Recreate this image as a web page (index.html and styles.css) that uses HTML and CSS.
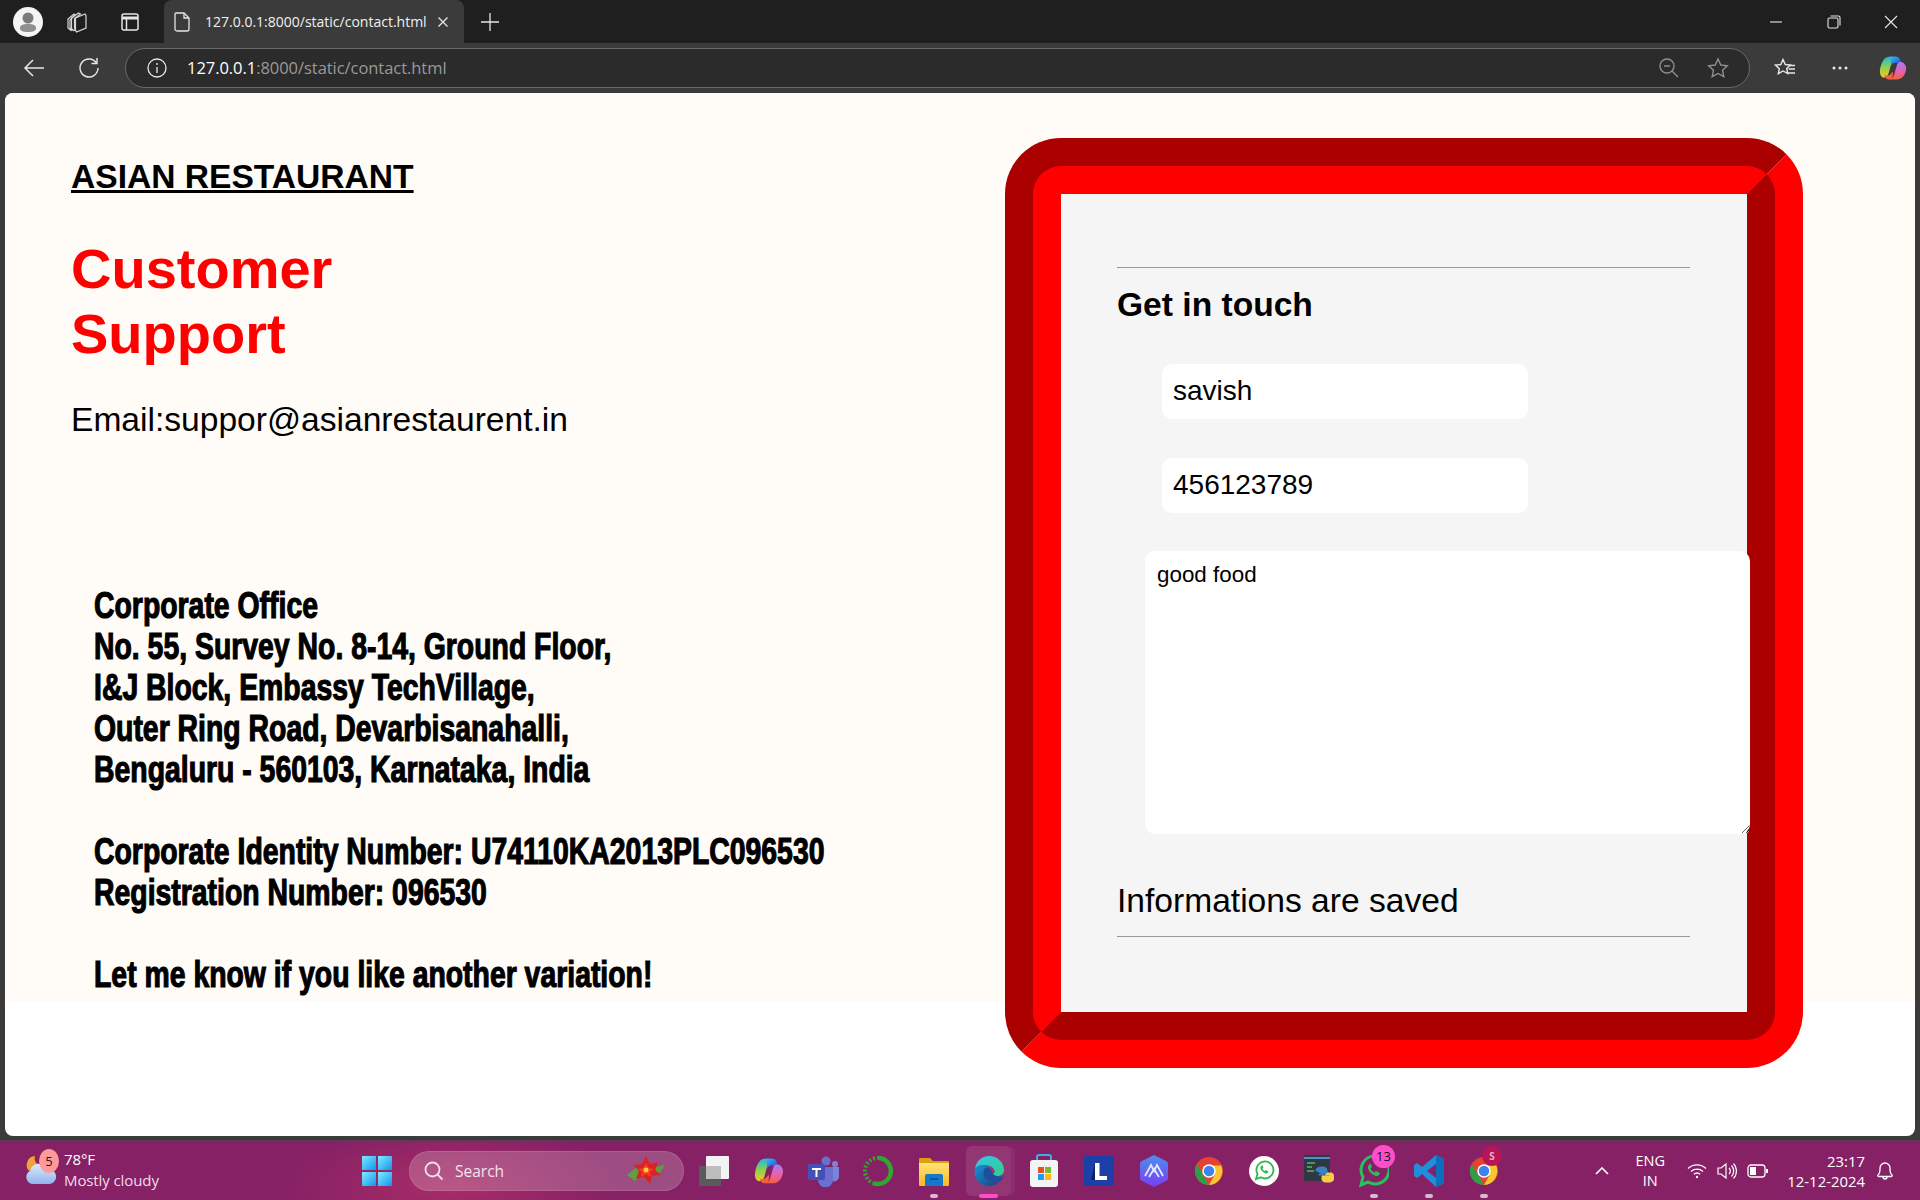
FILE: index.html
```html
<!DOCTYPE html>
<html lang="en">
<head>
<meta charset="utf-8">
<title>Contact</title>
<link rel="stylesheet" href="styles.css">
</head>
<body>
<svg class="defs" aria-hidden="true">
  <defs>
    <linearGradient id="cpA" x1="0" y1="0" x2="1" y2="1"><stop offset="0" stop-color="#2fc6f5"/><stop offset=".5" stop-color="#2a7be8"/><stop offset="1" stop-color="#1f4fc0"/></linearGradient>
    <linearGradient id="cpB" x1="0" y1="0" x2="0" y2="1"><stop offset="0" stop-color="#1fb7e8"/><stop offset=".5" stop-color="#8ed14c"/><stop offset="1" stop-color="#f5c62a"/></linearGradient>
    <linearGradient id="cpC" x1="0" y1="0" x2="0" y2="1"><stop offset="0" stop-color="#a67cf2"/><stop offset=".55" stop-color="#e85fb0"/><stop offset="1" stop-color="#f5603c"/></linearGradient>
    <linearGradient id="edgeA" x1="0" y1="0" x2="1" y2="1"><stop offset="0" stop-color="#35c6e8"/><stop offset="1" stop-color="#2fd08a"/></linearGradient>
    <linearGradient id="edgeB" x1="0" y1="0" x2="1" y2="1"><stop offset="0" stop-color="#1e8fd8"/><stop offset="1" stop-color="#12447f"/></linearGradient>
    <linearGradient id="folder" x1="0" y1="0" x2="0" y2="1"><stop offset="0" stop-color="#ffe27a"/><stop offset="1" stop-color="#fbb91c"/></linearGradient>
    <linearGradient id="win" x1="0" y1="0" x2="1" y2="1"><stop offset="0" stop-color="#7fecff"/><stop offset="1" stop-color="#0f94f0"/></linearGradient>
    <linearGradient id="hex" x1="0" y1="0" x2="0" y2="1"><stop offset="0" stop-color="#4d8ff0"/><stop offset="1" stop-color="#7a3df0"/></linearGradient>
    <linearGradient id="cloud" x1="0" y1="0" x2="0" y2="1"><stop offset="0" stop-color="#dfeafa"/><stop offset="1" stop-color="#8fb4ec"/></linearGradient>
    <symbol id="chrome" viewBox="0 0 32 32">
      <circle cx="16" cy="16" r="15" fill="#e3432f"/>
      <path d="M3 8.500 16 31a15 15 0 0 1-13-22.500z" fill="#2f9e4a"/>
      <path d="M16 10h13a15 15 0 0 1-13 21l6-11z" fill="#f8c62e"/>
      <circle cx="16" cy="16" r="7.200" fill="#fff"/>
      <circle cx="16" cy="16" r="5.600" fill="#3d82ee"/>
    </symbol>
    <symbol id="copilot" viewBox="0 0 32 32">
      <path d="M11 3h9c-4 1-5 4-6 8l-3 11c-1 3-3 5-6 5-3-1-4-4-4-7 0-6 4-17 10-17z" fill="url(#cpB)"/>
      <path d="M12 3h8c2 0 3 1 4 3l2 6c-2-2-4-2-7-2-3 0-4 1-5 4 0-4 0-9-2-11z" fill="url(#cpA)"/>
      <path d="M21 29h-9c4-1 5-4 6-8l3-10c1-2 3-2 5-2 3 1 5 4 5 7 0 6-4 13-10 13z" fill="url(#cpC)"/>
      <path d="M11 29c-2 0-3-1-4-3l-1-2c2 1 5 1 7-1l3-3c0 4 0 7-2 9z" fill="#f2603c"/>
    </symbol>
  </defs>
</svg>

<div class="browser">
  <header class="tabstrip">
    <svg class="avatar" width="30" height="30" viewBox="0 0 30 30"><circle cx="15" cy="15" r="15" fill="#f4f4f4"/><circle cx="15" cy="11" r="5.500" fill="#7b7b7b"/><path d="M7 21c0-3 3-4 8-4s8 1 8 4c0 3-3 4-8 4s-8-1-8-4z" fill="#8f8f8f"/></svg>
    <svg class="strip-icon ws" width="24" height="24" viewBox="0 0 24 24" fill="none" stroke="#d8d8d8" stroke-width="1.200"><path d="M3 9l6-5 1 1-5 5v8l2 2-1 .6L3 18z"/><path d="M6.500 8l7-5 2 1-6 4.500v9.500l1 2-2 .5-2-2z"/><path d="M10.500 8l9.500-4 1 1.500v12.500l-9.500 4-1-1.500z"/></svg>
    <svg class="strip-icon vt" width="20" height="20" viewBox="0 0 20 20" fill="none" stroke="#e6e6e6" stroke-width="1.500"><rect x="2" y="2" width="16" height="16" rx="2"/><path d="M2 6h16" stroke-width="3"/><path d="M6.500 6v12"/></svg>
    <div class="tab">
      <svg width="16" height="20" viewBox="0 0 16 20" fill="none" stroke="#e6e6e6" stroke-width="1.300"><path d="M2 1h8l5 5v11a2 2 0 0 1-2 2H3a2 2 0 0 1-2-2V2a1 1 0 0 1 1-1z"/><path d="M10 1v5h5"/></svg>
      <span class="tab-title">127.0.0.1:8000/static/contact.html</span>
      <svg class="tab-x" width="12" height="12" viewBox="0 0 12 12" stroke="#e6e6e6" stroke-width="1.300"><path d="M1.500 1.500l9 9M10.500 1.500l-9 9"/></svg>
    </div>
    <svg class="plus" width="18" height="18" viewBox="0 0 18 18" stroke="#e6e6e6" stroke-width="1.300"><path d="M9 0v18M0 9h18"/></svg>
    <div class="winctl">
      <svg width="14" height="14" viewBox="0 0 14 14" stroke="#e6e6e6" stroke-width="1.100"><path d="M1 7h12"/></svg>
      <svg width="14" height="14" viewBox="0 0 14 14" fill="none" stroke="#e6e6e6" stroke-width="1.100"><rect x="1" y="3" width="10" height="10" rx="1.500"/><path d="M3.500 1h8a1.500 1.500 0 0 1 1.500 1.500v8"/></svg>
      <svg width="14" height="14" viewBox="0 0 14 14" stroke="#e6e6e6" stroke-width="1.100"><path d="M1 1l12 12M13 1L1 13"/></svg>
    </div>
  </header>

  <nav class="toolbar">
    <svg class="tool-back" width="22" height="20" viewBox="0 0 22 20" fill="none" stroke="#e8e8e8" stroke-width="1.500"><path d="M21 10H2M10 2l-8 8 8 8"/></svg>
    <svg class="tool-reload" width="22" height="22" viewBox="0 0 22 22" fill="none" stroke="#e8e8e8" stroke-width="1.400"><path d="M18.500 6A9 9 0 1 0 20 11"/><path d="M19 1v5.500h-5.500"/></svg>
    <div class="addr">
      <svg width="20" height="20" viewBox="0 0 20 20" fill="none" stroke="#e8e8e8" stroke-width="1.300"><circle cx="10" cy="10" r="9"/><path d="M10 9v6M10 5v2"/></svg>
      <span class="url"><b>127.0.0.1</b>:8000/static/contact.html</span>
      <svg class="zoom-ic" width="20" height="20" viewBox="0 0 20 20" fill="none" stroke="#8f8f8f" stroke-width="1.400"><circle cx="8" cy="8" r="7"/><path d="M5 8h6M13 13l6 6"/></svg>
      <svg class="star-ic" width="22" height="22" viewBox="0 0 22 22" fill="none" stroke="#8f8f8f" stroke-width="1.400"><path d="M11 2l2.800 6 6.500.8-4.800 4.400 1.300 6.500L11 16.500l-5.800 3.200 1.300-6.500L1.700 8.800 8.200 8z"/></svg>
    </div>
    <svg class="fav-ic" width="22" height="20" viewBox="0 0 22 20" fill="none" stroke="#e8e8e8" stroke-width="1.400"><path d="M9 1.500l2.300 5 5 .6-3.600 3.400 1 5L9 13l-4.700 2.700 1-5L1.500 7.100l5.300-.6z"/><path d="M15 7.500h6M14.500 11h6.500M13 15h8"/></svg>
    <svg class="dots-ic" width="16" height="4" viewBox="0 0 16 4" fill="#e8e8e8"><circle cx="2" cy="2" r="1.500"/><circle cx="8" cy="2" r="1.500"/><circle cx="14" cy="2" r="1.500"/></svg>
    <svg class="copilot-ic" width="28" height="28"><use href="#copilot"/></svg>
  </nav>

  <div class="viewport">
    <main class="page">
      <section class="info">
        <h2 class="brand">ASIAN RESTAURANT</h2>
        <h1 class="support">Customer<br>Support</h1>
        <p class="email">Email:suppor@asianrestaurent.in</p>
        <p class="office">Corporate Office<br>No. 55, Survey No. 8-14, Ground Floor,<br>I&amp;J Block, Embassy TechVillage,<br>Outer Ring Road, Devarbisanahalli,<br>Bengaluru - 560103, Karnataka, India<br><br>Corporate Identity Number: U74110KA2013PLC096530<br>Registration Number: 096530<br><br>Let me know if you like another variation!</p>
      </section>
      <form class="card">
        <hr class="rule">
        <h3 class="touch">Get in touch</h3>
        <input class="field" type="text" value="savish">
        <input class="field" type="text" value="456123789">
        <textarea class="message">good food</textarea>
        <p class="saved">Informations are saved</p>
        <hr class="rule">
      </form>
    </main>
  </div>
</div>

<footer class="taskbar">
  <div class="weather">
    <svg class="weather-ic" width="34" height="34" viewBox="0 0 34 34"><path d="M12 2a9 9 0 0 0-6 15l9-6c-3-3-4-6-3-9z" fill="#f2a13a"/><path d="M9 30a7 7 0 0 1-2-13 9 9 0 0 1 17-2 7 7 0 0 1 3 15z" fill="url(#cloud)"/></svg>
    <span class="w-badge">5</span>
    <div class="w-text"><span class="w-temp">78°F</span><span>Mostly cloudy</span></div>
  </div>
  <svg class="start" width="30" height="30" viewBox="0 0 30 30"><g fill="url(#win)"><path d="M1 0h13v14H0V1a1 1 0 0 1 1-1z"/><path d="M16 0h13a1 1 0 0 1 1 1v13H16z"/><path d="M0 16h14v14H1a1 1 0 0 1-1-1z"/><path d="M16 16h14v13a1 1 0 0 1-1 1H16z"/></g></svg>
  <div class="search">
    <svg width="20" height="20" viewBox="0 0 20 20" fill="none" stroke="#f0dfe9" stroke-width="1.800"><circle cx="8.500" cy="8.500" r="7"/><path d="M13.500 13.500l5 5"/></svg>
    <span class="search-label">Search</span>
    <svg class="flower" width="42" height="32" viewBox="0 0 42 32"><path d="M2 20l10-8 6 8-8 6z" fill="#5f9e43"/><path d="M40 10l-10 2 2 10z" fill="#5f9e43"/><path d="M21 1l4 8 8-2-3 8 6 5-9 1-2 8-6-7-8 2 3-8-5-6 8-1z" fill="#dd2020"/><path d="M21 8l3 5 5 1-4 3 1 5-5-3-5 3 1-5-4-3 5-1z" fill="#f53a2a"/><circle cx="21" cy="15" r="2.500" fill="#f0d030"/></svg>
  </div>
  <div class="apps">
    <div class="slot"><svg width="30" height="30" viewBox="0 0 30 30"><rect x="0" y="10" width="22" height="20" rx="1" fill="#5a5a5a"/><rect x="7" y="0" width="23" height="23" rx="1" fill="#f3f3f3"/><rect x="7" y="10" width="15" height="13" fill="#bdbdbd"/></svg></div>
    <div class="slot"><svg width="30" height="34"><use href="#copilot"/></svg></div>
    <div class="slot"><svg width="32" height="32" viewBox="0 0 32 32"><circle cx="18" cy="6" r="4.500" fill="#6a6fd0"/><circle cx="27" cy="9" r="3" fill="#7b83d8"/><path d="M22 12h9v10a5 5 0 0 1-7 4z" fill="#7b83d8"/><path d="M10 12h15v13a7 7 0 0 1-15 0z" fill="#6a6fd0"/><rect x="0" y="9" width="17" height="16" rx="2" fill="#4450b8"/><path d="M4 13h9v2h-3.500v7h-2v-7H4z" fill="#fff"/></svg></div>
    <div class="slot"><svg width="32" height="32" viewBox="0 0 32 32" fill="none"><path d="M16 3a13 13 0 1 1-6 25" stroke="#2ea82e" stroke-width="4.500"/><path d="M16 3A13 13 0 0 0 10 28" stroke="#2ea82e" stroke-width="4" stroke-dasharray="2 2"/></svg></div>
    <div class="slot running"><svg width="30" height="30" viewBox="0 0 30 30"><path d="M0 3a1 1 0 0 1 1-1h10l3 3h15a1 1 0 0 1 1 1v4H0z" fill="#dfa010"/><path d="M0 7h30v22a1 1 0 0 1-1 1H1a1 1 0 0 1-1-1z" fill="url(#folder)"/><path d="M6 20a2 2 0 0 1 2-2h14a2 2 0 0 1 2 2v10H6z" fill="#1379c8"/><path d="M11 23h8" stroke="#0b4f8a" stroke-width="1.500"/></svg></div>
    <div class="slot active"><svg width="30" height="30" viewBox="0 0 30 30"><path d="M1 13C2 5 8 0 15 0c8 0 15 6 15 14 0 4-3 6-7 6-3 0-4-1-4-2 3-1 2-6-3-8C10 8 3 9 1 13z" fill="url(#edgeA)"/><path d="M1 13c-2 8 3 16 13 17 4 0 8-1 11-4-4 1-9 1-12-2-3-4-2-9 3-13C10 8 3 9 1 13z" fill="url(#edgeB)"/><path d="M13 11c-4 2-5 8-1 12 3 3 9 4 13 3 2-1 4-3 5-6-3 1-8 1-11-2-1-2-2-5-6-7z" fill="#1c4f9c"/></svg></div>
    <div class="slot"><svg width="30" height="34" viewBox="0 0 30 34"><path d="M8 8V3a2 2 0 0 1 2-2h10a2 2 0 0 1 2 2v5" fill="none" stroke="#2fb5e8" stroke-width="2"/><rect x="1" y="6" width="28" height="27" rx="3" fill="#f4f4f4"/><rect x="9" y="13" width="6" height="6" fill="#e8501f"/><rect x="16" y="13" width="6" height="6" fill="#7cb82f"/><rect x="9" y="20" width="6" height="6" fill="#19a0e8"/><rect x="16" y="20" width="6" height="6" fill="#fab81a"/></svg></div>
    <div class="slot"><svg width="30" height="30" viewBox="0 0 30 30"><rect width="30" height="30" fill="#1c3fa8"/><path d="M11 7h4.500v13H23v4H11z" fill="#fff"/><path d="M11 7v17H7z" fill="#0c2560"/></svg></div>
    <div class="slot"><svg width="28" height="32" viewBox="0 0 28 32"><path d="M14 0l12 6c2 1 2 2 2 4v12c0 2 0 3-2 4l-12 6-12-6c-2-1-2-2-2-4V10c0-2 0-3 2-4z" fill="url(#hex)"/><path d="M5 21l6-11 3 6 3-6 6 11M9 22l5-8 5 8" fill="none" stroke="#e0e8ff" stroke-width="1.800"/></svg></div>
    <div class="slot"><svg width="30" height="30"><use href="#chrome"/></svg></div>
    <div class="slot"><svg width="30" height="30" viewBox="0 0 30 30"><circle cx="15" cy="15" r="15" fill="#fff"/><path d="M7 23l1.500-5a8.500 8.500 0 1 1 3.200 3.300z" fill="none" stroke="#2fb84e" stroke-width="1.800"/><path d="M12 10c-1 1-1 3 1 5s4 3 5.500 2l1-1.500-2.500-1.500-1 1c-1 0-2.500-1.500-2.500-2.500l1-1-1.200-2.300z" fill="#2fb84e"/></svg></div>
    <div class="slot"><svg width="30" height="32" viewBox="0 0 30 32"><rect x="0" y="0" width="26" height="26" rx="1" fill="#2f3a40"/><path d="M0 3h26" stroke="#4b8fd0" stroke-width="2"/><path d="M3 8h8M3 12h5M3 16h7" stroke="#58b368" stroke-width="1.300"/><path d="M12 16c0-3 2-4 5-4h3c2 0 3 2 3 4v3h-8v1h5" fill="#3d7fc0" stroke="#3d7fc0" stroke-width="1"/><path d="M23 18h4c2 0 3 2 3 4 0 4-2 5-5 5h-3c-3 0-4-1-4-3v-3h8v-1h-5" fill="#f5cf45" stroke="#f5cf45" stroke-width="1"/></svg></div>
    <div class="slot running"><svg width="30" height="34" viewBox="0 0 30 34" fill="none"><path d="M2 31l2-8a14 14 0 1 1 5 5z" stroke="#25c35c" stroke-width="3"/><path d="M10 11c-2 2-1 5 2 8s6 4 8 2l1-2-4-2-1.500 1.500c-1.500-.5-3.500-2.500-4-4L13 13l-2-4z" fill="#25c35c"/></svg><span class="count">13</span></div>
    <div class="slot running"><svg width="30" height="34" viewBox="0 0 30 34"><path d="M22 1l8 4v24l-8 4L8 20l-5 4-3-2v-11l3-2 5 4z" fill="#1f8fdc"/><path d="M22 1l8 4v24l-8 4z" fill="#0c6fbd"/><path d="M22 10l-9 7 9 7z" fill="#862165"/></svg></div>
    <div class="slot running"><svg width="30" height="30"><use href="#chrome"/></svg><span class="profile">S</span></div>
  </div>
  <div class="tray">
    <svg class="chev" width="14" height="8" viewBox="0 0 14 8" fill="none" stroke="#fff" stroke-width="1.600"><path d="M1 7l6-6 6 6"/></svg>
    <div class="lang"><span>ENG</span><span>IN</span></div>
    <svg width="20" height="16" viewBox="0 0 20 16" fill="none" stroke="#fff" stroke-width="1.300"><path d="M1 5.500a13 13 0 0 1 18 0M4 8.500a9 9 0 0 1 12 0M6.800 11.300a5 5 0 0 1 6.400 0"/><circle cx="10" cy="14" r="1.200" fill="#fff" stroke="none"/></svg>
    <svg width="20" height="18" viewBox="0 0 20 18" fill="none" stroke="#fff" stroke-width="1.200"><path d="M1 6v6h3l5 4V2L4 6z"/><path d="M12 6a4 4 0 0 1 0 6M14.500 3.500a8 8 0 0 1 0 11M16.500 1.500a11 11 0 0 1 0 15"/></svg>
    <svg width="21" height="14" viewBox="0 0 21 14" fill="none" stroke="#fff" stroke-width="1.300"><rect x="1" y="1" width="17" height="12" rx="3"/><rect x="3" y="3" width="6" height="8" fill="#fff" stroke="none"/><path d="M20 5v4" stroke-width="2"/></svg>
    <div class="clock"><span>23:17</span><span>12-12-2024</span></div>
    <svg class="bell" width="18" height="20" viewBox="0 0 18 20" fill="none" stroke="#fff" stroke-width="1.300"><path d="M2 14c1-1 2-2 2-5V7a5 5 0 0 1 10 0v2c0 3 1 4 2 5 .5 1 0 1.500-1 1.500H3c-1 0-1.500-.5-1-1.500z"/><path d="M7 16a2 2 0 0 0 4 0"/></svg>
  </div>
</footer>
</body>
</html>
```
FILE: styles.css
```css
* { box-sizing: border-box; }
html, body { margin: 0; padding: 0; }
body { width: 1920px; height: 1200px; overflow: hidden; background: #3b3b3b; font-family: "Liberation Sans", Arial, sans-serif; }
.defs { position: absolute; width: 0; height: 0; }
svg { display: block; flex: none; }

.browser { height: 1140px; display: flex; flex-direction: column; background: #3b3b3b; }
.tabstrip { height: 43px; flex: none; background: #1f1f1f; display: flex; align-items: center; padding-left: 13px; }
.strip-icon.ws { margin-left: 22px; }
.strip-icon.vt { margin-left: 31px; }
.tab { width: 300px; height: 43px; margin-left: 24px; background: #3b3b3b; border-radius: 8px 8px 0 0; display: flex; align-items: center; padding-left: 10px; color: #f0f0f0; }
.tab-title { margin-left: 15px; font: 14px/20px "Open Sans", sans-serif; letter-spacing: 0; white-space: nowrap; width: 226px; }
.tab-x { margin-left: 6px; }
.plus { margin-left: 17px; }
.winctl { margin-left: auto; display: flex; gap: 43.500px; padding-right: 22px; }

.toolbar { height: 50px; flex: none; display: flex; align-items: center; padding: 0 13px 1px 23px; }
.tool-reload { margin-left: 33px; }
.addr { width: 1625px; height: 40px; margin-left: 25px; background: #2b2b2b; border: 1px solid #6a6a6a; border-radius: 20px; display: flex; align-items: center; padding-left: 21px; }
.url { margin-left: 20px; font: 16.500px/20px "Open Sans", sans-serif; letter-spacing: -.05px; color: #9a9a9a; white-space: nowrap; }
.url b { font-weight: 400; color: #fff; }
.zoom-ic { margin-left: auto; }
.star-ic { margin-left: 28px; margin-right: 20px; }
.fav-ic { margin-left: 24px; }
.dots-ic { margin-left: 36px; }
.copilot-ic { margin-left: 31px; }

.viewport { flex: 1; margin: 0 5px 4px; background: #fff; border-radius: 8px; overflow: hidden; }
.page { height: 909px; background: #fffbf6; display: flex; align-items: flex-start; padding-left: 66px; }
.info { width: 934px; flex: none; color: #000; }
.brand { margin: 64px 0 0; font-size: 33.600px; line-height: 40px; font-weight: 700; text-decoration: underline; }
.support { margin: 39px 0 0; font-size: 56px; line-height: 65px; font-weight: 700; color: #f00; }
.email { margin: 34px 0 0; font-size: 33.600px; line-height: 40px; }
.office { margin: 145px 0 0 23px; font-size: 37.500px; line-height: 41px; font-weight: 700; white-space: nowrap; -webkit-text-stroke: 1.200px #000; transform: scaleX(.757); transform-origin: left top; }

.card { width: 798px; height: 930px; flex: none; margin-top: 45px; background: #f5f5f5; border: 56px groove #f00; border-radius: 56px; padding: 73px 0 0 56px; }
.rule { width: 573px; height: 1px; margin: 0; border: 0; background: #999; }
.touch { margin: 17px 0 0; font-size: 33.600px; line-height: 40px; font-weight: 700; color: #000; }
.field { display: block; width: 366px; height: 55px; margin: 39px 0 0 45px; padding: 0 11px 2px; border: 0; border-radius: 10px; background: #fff; font: 28px "Liberation Sans", sans-serif; color: #000; outline: 0; }
.field + .field { margin-top: 39px; }
.message { display: block; position: relative; width: 605px; height: 283px; margin: 38px 0 0 28px; padding: 10px 12px; border: 0; border-radius: 10px; background: #fff; font: 22.400px/28px "Liberation Sans", sans-serif; color: #000; outline: 0; }
.saved { margin: 47px 0 0; font-size: 33.600px; line-height: 40px; color: #000; }
.saved + .rule { margin-top: 15px; }

.taskbar { height: 60px; background: radial-gradient(ellipse 170px 60px at 450px 45px, #a82c68 0%, #862165 100%), #862165; border-top: 1px solid #5d3a58; display: flex; align-items: center; color: #fff; font-family: "Open Sans", sans-serif; }
.weather { width: 362px; flex: none; height: 59px; display: flex; align-items: center; padding-left: 23px; position: relative; }
.w-badge { position: absolute; left: 39px; top: 8px; width: 20px; height: 24px; border-radius: 50%; background: #ff9a9a; color: #1a1a1a; font-size: 13px; line-height: 24px; text-align: center; }
.w-text { display: flex; flex-direction: column; margin: 0 0 2px 7px; font-size: 15px; line-height: 21px; letter-spacing: -.1px; color: #f0dce8; }
.w-temp { color: #fff; }
.search { width: 275px; height: 40px; margin-left: 17px; flex: none; border-radius: 20px; background: rgba(255,255,255,.2); border: 1px solid rgba(255,255,255,.12); display: flex; align-items: center; padding-left: 14px; color: #f3e3ec; }
.search-label { margin-left: 11px; font-size: 15.500px; }
.flower { margin-left: auto; margin-right: 16px; }
.apps { display: flex; margin-left: 2px; }
.slot { width: 55px; height: 59px; display: flex; align-items: center; justify-content: center; position: relative; }
.running::after { content: ""; position: absolute; left: 24px; bottom: 2px; width: 8px; height: 4px; border-radius: 2px; background: #d9b9cd; }
.active::before { content: ""; position: absolute; left: 5px; top: 5px; width: 45px; height: 50px; border-radius: 6px; background: rgba(255,255,255,.1); box-shadow: 5px 0 0 -1px rgba(255,255,255,.05); }
.active svg { position: relative; }
.active.slot::after { content: ""; position: absolute; left: 18px; bottom: 2px; width: 19px; height: 4px; border-radius: 2px; background: #ff4fc8; }
.count { position: absolute; left: 26px; top: 4px; width: 23px; height: 23px; border-radius: 50%; background: #ff4fc8; color: #111; font-size: 13px; line-height: 23px; text-align: center; }
.profile { position: absolute; left: 26px; top: 5px; width: 20px; height: 20px; border-radius: 50%; background: #b81558; color: #e8b0c8; font-size: 10px; font-weight: 700; line-height: 20px; text-align: center; }
.tray { margin-left: auto; display: flex; align-items: center; gap: 10px; padding-right: 26px; }
.chev { margin-right: 10px; }
.lang { display: flex; flex-direction: column; align-items: center; width: 42px; margin-right: 6px; font-size: 14.500px; line-height: 20px; }
.clock { display: flex; flex-direction: column; align-items: flex-end; margin-left: 9px; font-size: 14.900px; line-height: 20px; }
.bell { margin-left: 1px; }
```
